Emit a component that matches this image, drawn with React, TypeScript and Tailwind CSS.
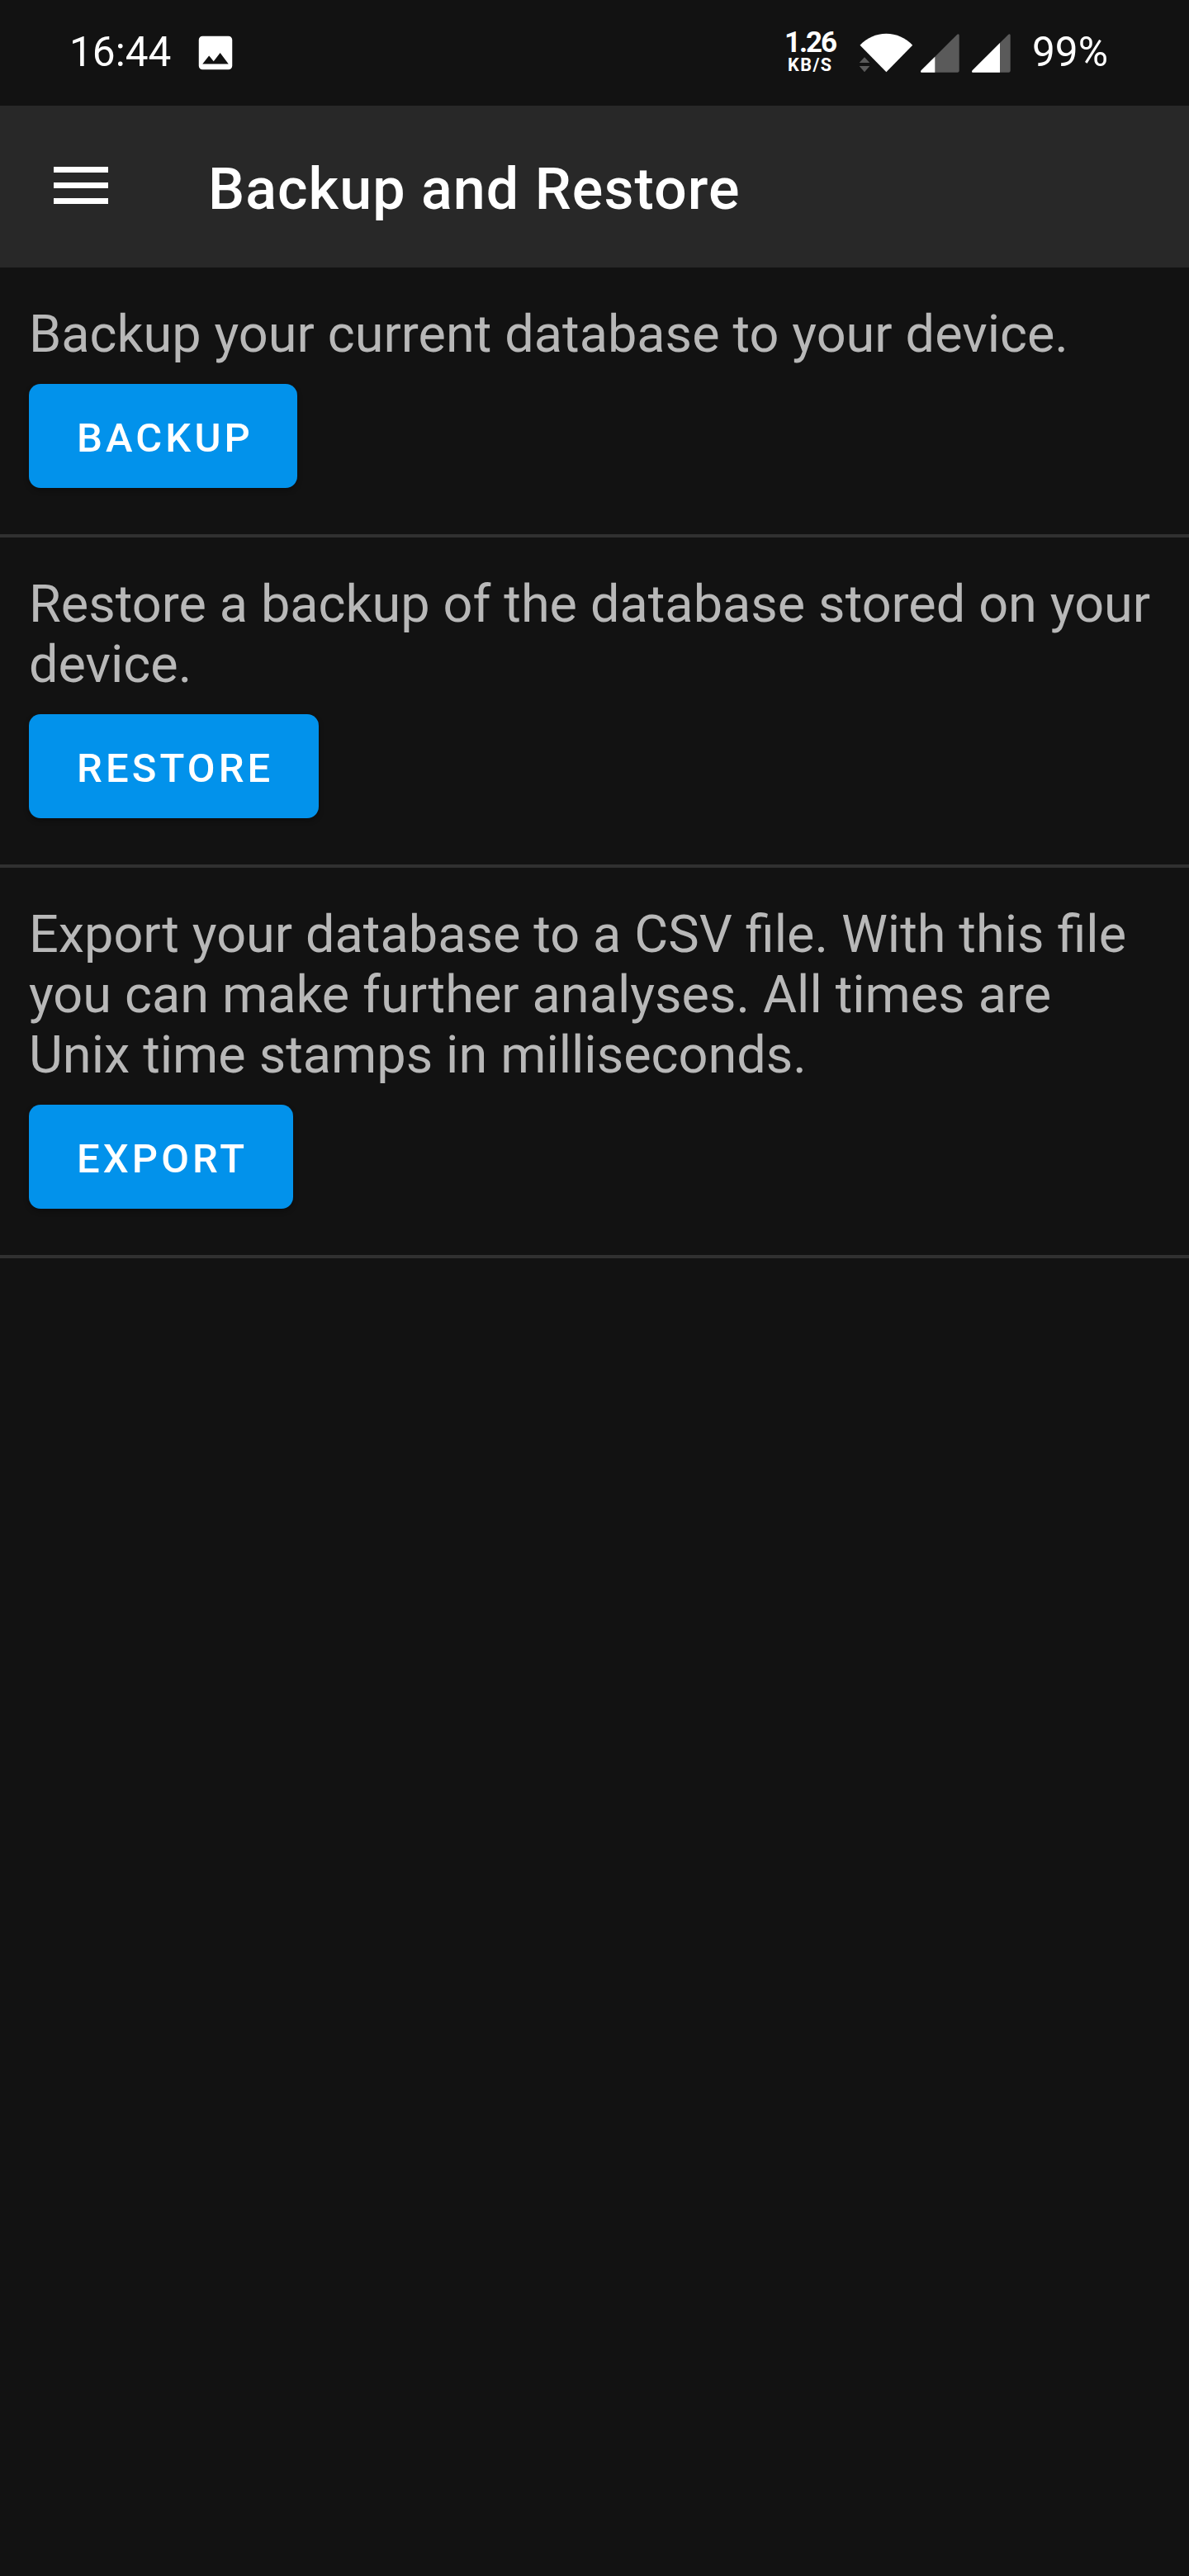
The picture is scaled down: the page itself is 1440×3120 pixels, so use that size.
type Section = { lines: string[]; label: string; width: string };

const sections: Section[] = [
  { lines: ["Backup your current database to your device."], label: "BACKUP", width: "w-[325px]" },
  { lines: ["Restore a backup of the database stored on your", "device."], label: "RESTORE", width: "w-[351px]" },
  {
    lines: [
      "Export your database to a CSV file. With this file",
      "you can make further analyses. All times are",
      "Unix time stamps in milliseconds.",
    ],
    label: "EXPORT",
    width: "w-[320px]",
  },
];

function ImageIcon() {
  return (
    <svg className="ml-[27px] mt-[37px] size-[54px] shrink-0" viewBox="0 0 24 24" fill="#fff">
      <path d="M21 19V5c0-1.100-.9-2-2-2H5c-1.100 0-2 .9-2 2v14c0 1.100.9 2 2 2h14c1.100 0 2-.9 2-2zM8.500 13.500l2.500 3.010L14.500 12l4.500 6H5l3.500-4.500z" />
    </svg>
  );
}

function WifiIcon() {
  return (
    <svg className="mt-10 h-12 w-[66px] shrink-0" viewBox="0 0 66 48">
      <path d="M1.500 14.700A43.600 43.600 0 0 1 65.200 14.700L33.400 47.200Z" fill="#fff" />
      <path d="M0.700 36.200L7 29.200L13.300 36.200ZM0.700 40L7 47.300L13.300 40Z" fill="#121212" stroke="#121212" strokeWidth="2" />
      <path d="M0.700 36L7 29.300L13.300 36ZM0.700 40L7 47.200L13.300 40Z" fill="#5a5a5a" />
    </svg>
  );
}

function SignalIcon({ level }: { level: number }) {
  return (
    <svg className="mt-[41px] h-[47px] w-[47px] shrink-0" viewBox="0 0 47 47">
      <path d="M1.200 46.800Q-.8 46.400.7 44.300L44.300.7Q46.500-.6 46.700 1.800V44.500Q46.700 46.800 44.500 46.800Z" fill="#5a5a5a" />
      <path d={`M1.200 46.800Q-.8 46.400.7 44.300L${level} ${45 - level}V46.800Z`} fill="#fff" />
    </svg>
  );
}

function StatusBar() {
  return (
    <div className="flex h-32 items-start justify-between pl-[84px] pr-[98px]">
      <div className="flex items-start">
        <span className="mt-[34px] text-[49.5px] leading-[58px]">16:44</span>
        <ImageIcon />
      </div>
      <div className="flex items-start">
        <div className="mr-[24px] mt-[31px] flex w-[66px] flex-col items-start font-bold">
          <span className="text-[35px] leading-[41px] tracking-[-2.1px]">1.26</span>
          <span className="-mt-1.5 ml-[4px] text-[21.5px] leading-[25px] tracking-[1.5px]">KB/S</span>
        </div>
        <WifiIcon />
        <div className="ml-[9px] mr-[26px] flex gap-[15px]">
          <SignalIcon level={17.3} />
          <SignalIcon level={34} />
        </div>
        <span className="mt-[34px] w-[92px] whitespace-nowrap text-[49.5px] leading-[58px]">99%</span>
      </div>
    </div>
  );
}

function Header() {
  return (
    <header className="flex h-[196px] items-start bg-[#282828] pl-[65px]">
      <div className="mt-[74px] flex w-[66px] flex-col gap-3">
        <span className="h-[7px] bg-white" />
        <span className="h-[7px] bg-white" />
        <span className="h-[7px] bg-white" />
      </div>
      <h1 className="ml-[121px] mt-[60px] text-[70px] font-medium leading-[82px] tracking-[0.015em]">Backup and Restore</h1>
    </header>
  );
}

export default function App() {
  return (
    <div className="h-[3120px] w-[1440px] overflow-hidden bg-[#121212] font-['Roboto',sans-serif] text-white">
      <StatusBar />
      <Header />
      <main>
        {sections.map((s) => (
          <section key={s.label} className="border-b-4 border-[#303030] pb-14 pl-[35px] pt-11">
            <p className="whitespace-nowrap text-[63px] leading-[73px] text-[#b8b8b8] [word-spacing:0.3px]">
              {s.lines.map((line) => (
                <span key={line} className="block">
                  {line}
                </span>
              ))}
            </p>
            <button
              className={`mt-6 flex h-[126px] items-start rounded-[14px] bg-[#0292eb] pl-[58px] pt-[37px] text-[49px] font-medium leading-[57px] tracking-[4.1px] shadow-[0_3px_6px_rgba(0,0,0,0.3)] ${s.width}`}
            >
              {s.label}
            </button>
          </section>
        ))}
      </main>
    </div>
  );
}
